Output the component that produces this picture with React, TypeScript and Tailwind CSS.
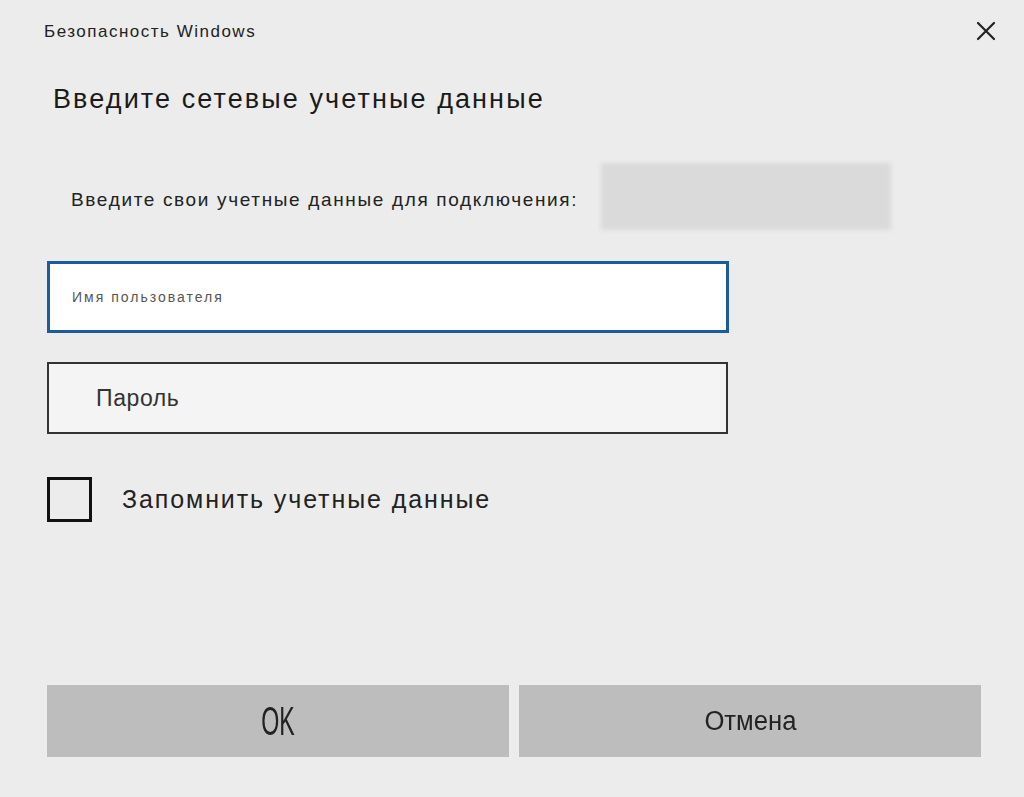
import React from "react";

export default function App() {
  return (
    <div
      className="w-[1024px] h-[797px] bg-[#ececec] flex flex-col text-[#1a1a1a] overflow-hidden"
      style={{ fontFamily: '"Liberation Sans", Arial, sans-serif' }}
    >
      <div className="flex items-center justify-between pl-[44px] pr-[28px] pt-[20px] h-[44px]">
        <span className="text-[17px] tracking-[1.5px] text-[#222]">Безопасность Windows</span>
        <svg width="20" height="20" viewBox="0 0 20 20" className="mt-[-3px]">
          <path d="M2 2 L18 18 M18 2 L2 18" stroke="#222" strokeWidth="2.2" strokeLinecap="round" />
        </svg>
      </div>
      <h1 className="pl-[53px] mt-[38px] text-[27px] tracking-[2.1px] leading-[34px] text-[#1a1a1a]">
        Введите сетевые учетные данные
      </h1>
      <div className="flex items-center pl-[71px] mt-[47px] h-[67px]">
        <span className="text-[19px] tracking-[1.65px] text-[#222] w-[530px] whitespace-nowrap mt-[8px]">
          Введите свои учетные данные для подключения:
        </span>
        <div className="w-[290px] h-[67px] bg-[#dadada] blur-[2px]" />
      </div>
      <div className="pl-[47px] mt-[31px] flex flex-col">
        <div className="w-[682px] h-[72px] bg-white border-[3px] border-[#1d5c9c] flex items-center pl-[22px]">
          <span className="text-[14px] tracking-[2px] text-[#555]">Имя пользователя</span>
        </div>
        <div className="w-[681px] h-[72px] mt-[29px] bg-[#f4f4f4] border-2 border-[#333] flex items-center pl-[47px]">
          <span className="text-[23px] tracking-[0.6px] text-[#333]">Пароль</span>
        </div>
        <div className="flex items-center mt-[43px] gap-[30px]">
          <div className="w-[45px] h-[45px] border-[3px] border-[#111] bg-[#ececec]" />
          <span className="text-[25px] tracking-[1.9px] text-[#222]">Запомнить учетные данные</span>
        </div>
      </div>
      <div className="flex gap-[10px] pl-[47px] mt-[163px]">
        <button className="w-[462px] h-[72px] bg-[#bdbdbd] flex items-center justify-center">
          <span className="text-[40px] leading-none text-[#222] scale-x-[0.58] inline-block">OK</span>
        </button>
        <button className="w-[462px] h-[72px] bg-[#bdbdbd] flex items-center justify-center">
          <span className="text-[27px] leading-none text-[#222] scale-x-[0.95] inline-block">Отмена</span>
        </button>
      </div>
    </div>
  );
}
